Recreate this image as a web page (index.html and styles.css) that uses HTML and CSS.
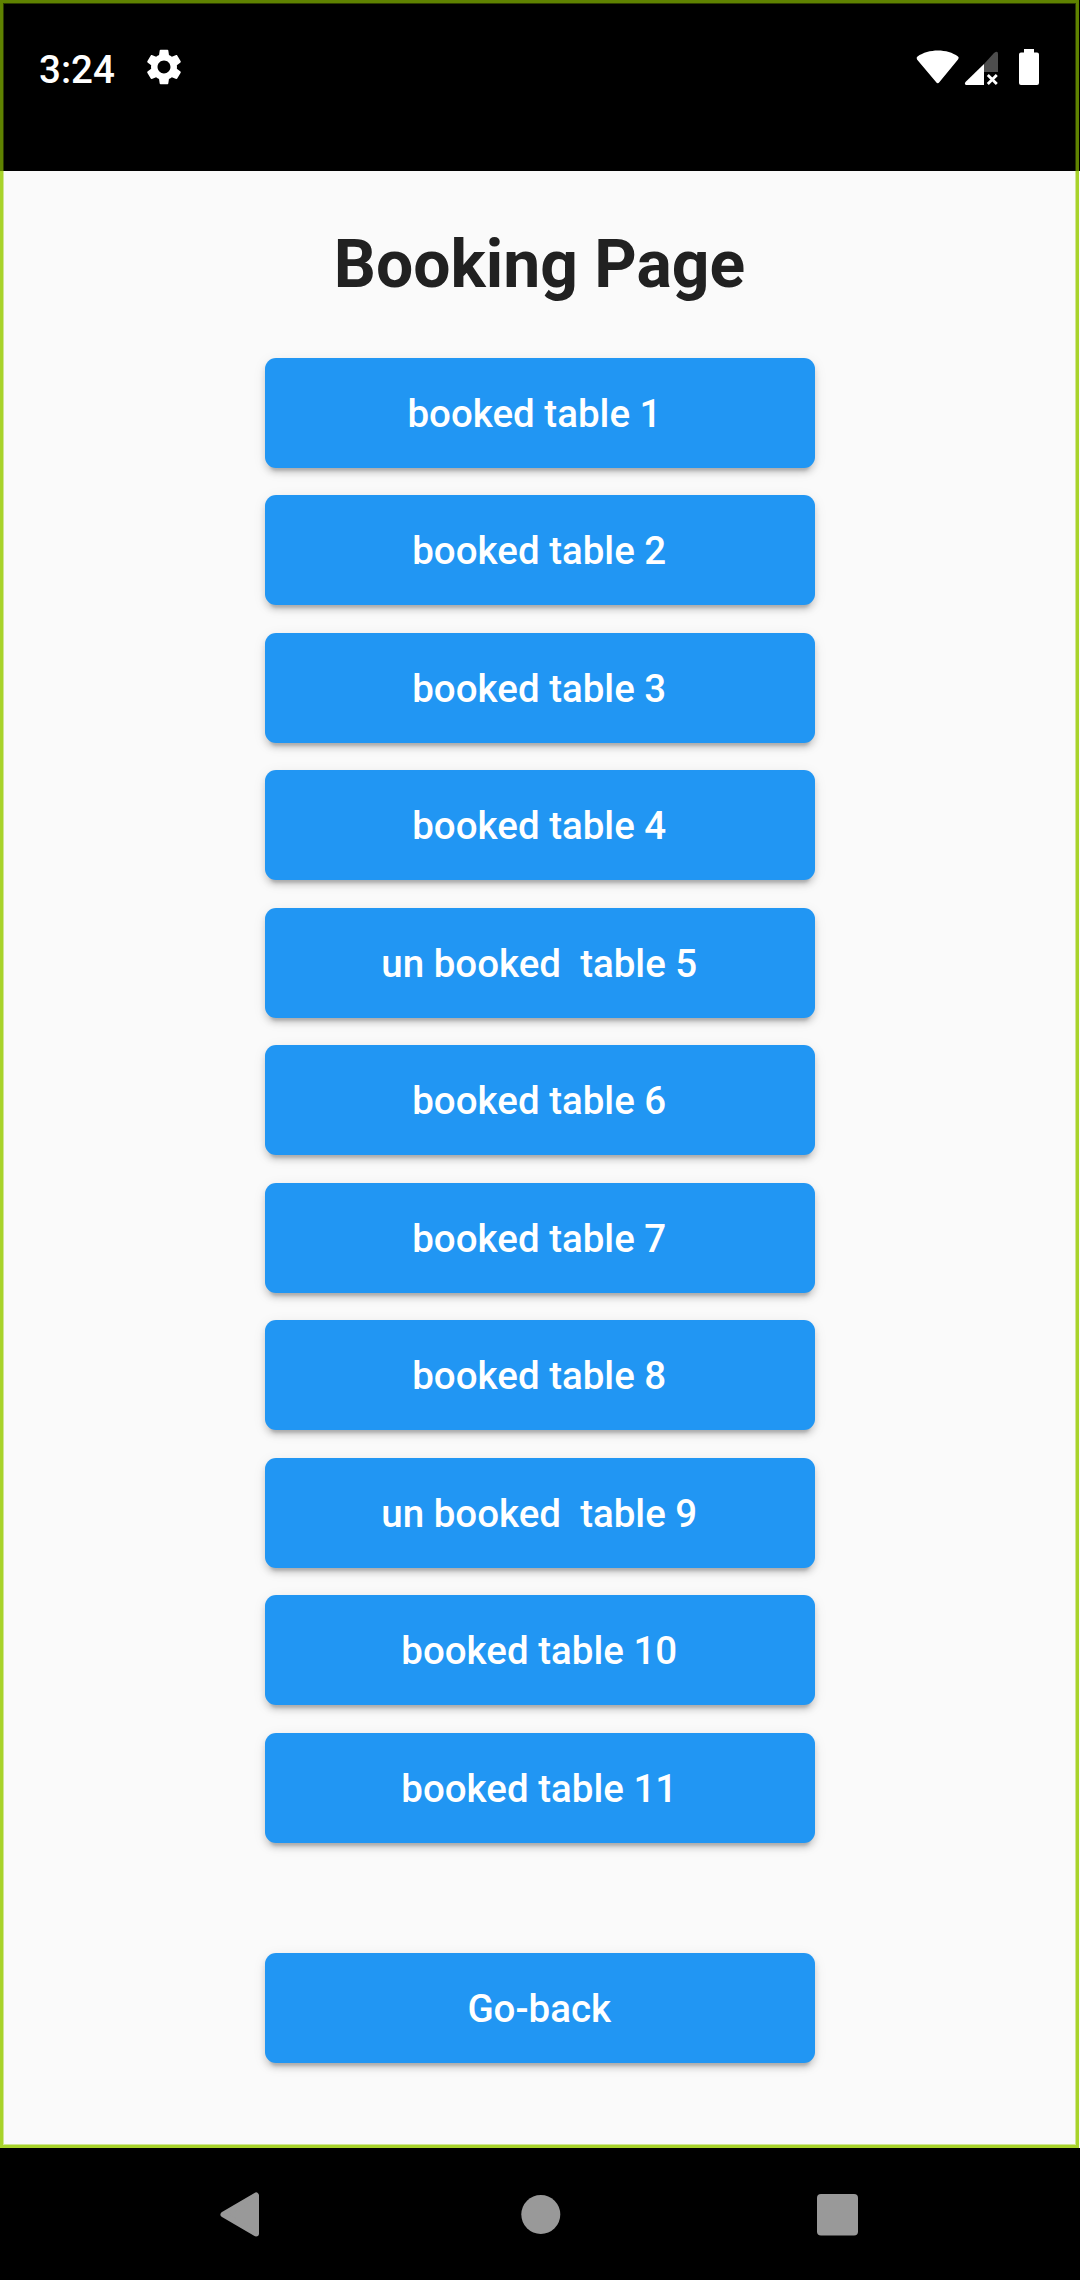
FILE: index.html
```html
<!DOCTYPE html>
<html lang="en">
<head>
<meta charset="utf-8">
<title>Booking Page</title>
<link rel="stylesheet" href="styles.css">
</head>
<body>
<div class="screen">
  <header class="status-bar">
    <span class="clock">3:24</span>
    <svg class="gear" viewBox="2 2 20 20" aria-hidden="true"><path fill="#fff" d="M19.14 12.94c.04-.3.06-.61.06-.94 0-.32-.02-.64-.07-.94l2.03-1.58c.18-.14.23-.41.12-.61l-1.92-3.32c-.12-.22-.37-.29-.59-.22l-2.39.96c-.5-.38-1.03-.7-1.62-.94L14.4 2.81c-.04-.24-.24-.41-.48-.41h-3.84c-.24 0-.43.17-.47.41l-.36 2.54c-.59.24-1.13.57-1.62.94l-2.39-.96c-.22-.08-.47 0-.59.22L2.74 8.87c-.12.21-.08.47.12.61l2.03 1.58c-.05.3-.09.63-.09.94s.02.64.07.94l-2.03 1.58c-.18.14-.23.41-.12.61l1.92 3.32c.12.22.37.29.59.22l2.39-.96c.5.38 1.03.7 1.62.94l.36 2.54c.05.24.24.41.48.41h3.84c.24 0 .44-.17.47-.41l.36-2.54c.59-.24 1.13-.56 1.62-.94l2.39.96c.22.08.47 0 .59-.22l1.92-3.32c.12-.22.07-.47-.12-.61l-2.01-1.58zM12 15.6c-1.98 0-3.6-1.62-3.6-3.6s1.62-3.6 3.6-3.6 3.6 1.62 3.6 3.6-1.62 3.6-3.6 3.6z"/></svg>
    <svg class="indicators" viewBox="0 0 126 40" aria-hidden="true">
      <path fill="#fff" d="M2.500 10.500C13.500 2.500 32.500 2.500 43 10.500Q44.500 11.500 43 13.500L24.500 36Q22.700 38.500 21 36L2 13.500Q1 11.500 2.500 10.500Z"/>
      <path fill="#4d4d4d" d="M69 18L79 7Q83 4 83 8V26H69Z"/>
      <path fill="#fff" d="M69 18V39H51Q49 38 50.500 36Z"/>
      <path stroke="#fff" stroke-width="2.800" d="M72.800 29L81.800 38M81.800 29L72.800 38"/>
      <path fill="#fff" d="M109 3H119V6.500H122Q124 6.500 124 8.500V37Q124 39 122 39H106Q104 39 104 37V8.500Q104 6.500 106 6.500H109Z"/>
    </svg>
  </header>
  <main class="page">
    <h1 class="title">Booking Page</h1>
    <div class="tables">
      <button class="btn">booked table 1 </button>
      <button class="btn">booked table 2</button>
      <button class="btn">booked table 3</button>
      <button class="btn">booked table 4</button>
      <button class="btn">un booked  table 5</button>
      <button class="btn">booked table 6</button>
      <button class="btn">booked table 7</button>
      <button class="btn">booked table 8</button>
      <button class="btn">un booked  table 9</button>
      <button class="btn">booked table 10</button>
      <button class="btn">booked table 11</button>
    </div>
    <button class="btn">Go-back</button>
  </main>
  <nav class="nav-bar">
    <svg viewBox="0 0 48 48" aria-hidden="true"><path fill="#999" stroke="#999" stroke-width="6" stroke-linejoin="round" d="M7.500 24.500L40 5.500V43.500Z"/></svg>
    <svg viewBox="0 0 48 48" aria-hidden="true"><circle fill="#999" cx="25.800" cy="24.500" r="19.500"/></svg>
    <svg viewBox="0 0 48 48" aria-hidden="true"><rect fill="#999" x="4" y="4" width="41" height="41.500" rx="4"/></svg>
  </nav>
  <div class="focus-frame">
    <div class="frame-top"></div>
    <div class="frame-body"></div>
  </div>
</div>
</body>
</html>
```
FILE: styles.css
```css
* {
  box-sizing: border-box;
}

body {
  margin: 0;
  background: #000;
  font-family: Roboto, sans-serif;
}

.screen {
  position: relative;
  display: flex;
  flex-direction: column;
  width: 1080px;
  height: 2280px;
}

.status-bar {
  display: flex;
  align-items: flex-start;
  height: 171px;
  padding: 46px 39px 0 39px;
  background: #000;
  color: #fff;
}

.clock {
  width: 107px;
  padding-top: 1px;
  font-size: 38.5px;
  font-weight: 500;
  line-height: 46px;
}

.gear {
  width: 36px;
  height: 36px;
  margin-top: 3px;
}

.indicators {
  width: 126px;
  height: 40px;
  margin-left: auto;
}

.page {
  display: flex;
  flex: 1;
  flex-direction: column;
  align-items: center;
  padding-top: 55px;
  background: #fafafa;
}

.title {
  margin: 0 0 54px;
  padding-right: 1px;
  color: #212121;
  font-size: 66px;
  font-weight: 700;
  line-height: 78px;
}

.tables {
  display: flex;
  flex-direction: column;
  gap: 27.5px;
  margin-bottom: 110px;
}

.btn {
  width: 550px;
  height: 110px;
  padding: 0 1.5px 0 0;
  border: 0;
  border-radius: 11px;
  background: #2196f3;
  box-shadow: 0 8px 3px -5px rgba(0, 0, 0, 0.16), 0 5px 6px rgba(0, 0, 0, 0.14), 0 3px 14px rgba(0, 0, 0, 0.08);
  color: #fff;
  font-family: inherit;
  font-size: 38.5px;
  font-weight: 500;
  white-space: pre;
}

.tables .btn:nth-child(even) {
  margin: -0.5px 0 0.5px;
}

.nav-bar {
  display: flex;
  justify-content: space-between;
  height: 132px;
  padding: 42px 219px 0 216px;
  background: #000;
}

.nav-bar svg {
  width: 48px;
  height: 48px;
}

.focus-frame {
  position: absolute;
  inset: 0 1px 132px 0;
  display: flex;
  flex-direction: column;
  pointer-events: none;
}

.frame-top {
  height: 171px;
  border: 3px solid #5f8200;
  border-bottom: 0;
  box-shadow: inset 1px 1px #2c3c00, inset -1px 0 #2c3c00;
}

.frame-body {
  flex: 1;
  border: 3px solid #a8d32b;
  border-top: 0;
  box-shadow: inset 1px -1px #d0e693, inset -1px 0 #d0e693;
}
```
